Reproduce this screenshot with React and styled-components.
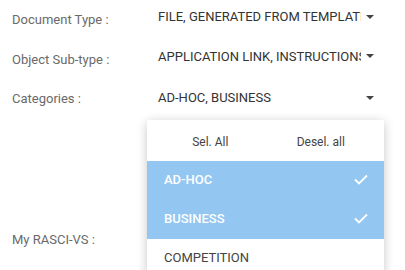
import React from "react";
import styled, { createGlobalStyle } from "styled-components";

const GlobalStyle = createGlobalStyle`
  body {
    margin: 0;
    background: #fff;
    font-family: Roboto, "Liberation Sans", sans-serif;
  }
`;

const fields = [
  { label: "Document Type :", value: "FILE, GENERATED FROM TEMPLATE", lift: 3 },
  { label: "Object Sub-type :", value: "APPLICATION LINK, INSTRUCTIONS", lift: 3 },
  { label: "Categories :", value: "AD-HOC, BUSINESS", lift: 1 },
];

const options = [
  { name: "AD-HOC", selected: true },
  { name: "BUSINESS", selected: true },
  { name: "COMPETITION", selected: false },
];

const App = () => {
  return (
    <Page>
      <GlobalStyle />
      <Form>
        {fields.map((f) => (
          <Row key={f.label}>
            <Label>{f.label}</Label>
            <Select $lift={f.lift}>
              <Value>{f.value}</Value>
              <Caret />
            </Select>
          </Row>
        ))}
        <Spacer />
        <Row>
          <Label>My RASCI-VS :</Label>
        </Row>
      </Form>

      <Menu>
        <MenuHeader>
          <HeaderButton>Sel. All</HeaderButton>
          <HeaderButton>Desel. all</HeaderButton>
        </MenuHeader>
        {options.map((o) => (
          <Option key={o.name} $selected={o.selected}>
            <span>{o.name}</span>
            {o.selected && (
              <svg width="14" height="11" viewBox="0 0 14 11">
                <path d="M1 5.5 L5 9.5 L13 1.5" fill="none" stroke="#fff" strokeWidth="1.8" />
              </svg>
            )}
          </Option>
        ))}
      </Menu>
    </Page>
  );
};

const Page = styled.div`
  position: relative;
  width: 405px;
  height: 270px;
  overflow: hidden;
`;

const Form = styled.div`
  display: flex;
  flex-direction: column;
  padding: 0 0 0 12px;
`;

const Row = styled.div`
  display: grid;
  grid-template-columns: 146px auto;
  justify-content: start;
  align-items: center;
  height: 39.5px;
`;

const Label = styled.div`
  font-size: 13px;
  color: #6a6a6a;
`;

const Select = styled.div`
  display: flex;
  align-items: center;
  gap: 5px;
  margin-top: -${(p) => p.$lift * 2}px;
`;

const Value = styled.div`
  width: 203px;
  overflow: hidden;
  white-space: nowrap;
  font-size: 13px;
  color: #333;
`;

const Caret = styled.span`
  width: 0;
  height: 0;
  border-left: 4px solid transparent;
  border-right: 4px solid transparent;
  border-top: 4px solid #444;
`;

const Spacer = styled.div`
  height: 101px;
`;

const Menu = styled.div`
  position: absolute;
  left: 147px;
  top: 120px;
  width: 237px;
  background: #fff;
  box-shadow: 0 2px 10px rgba(0, 0, 0, 0.22);
`;

const MenuHeader = styled.div`
  display: grid;
  grid-template-columns: 1fr 1fr;
  height: 41px;
  padding: 0 8px;
  align-items: center;
`;

const HeaderButton = styled.div`
  text-align: center;
  font-size: 12px;
  color: #444;
  padding-top: 3px;
`;

const Option = styled.div`
  box-sizing: border-box;
  display: flex;
  align-items: center;
  justify-content: space-between;
  height: 39px;
  padding: 0 16px 3px 17px;
  font-size: 13px;
  line-height: 1;
  background: ${(p) => (p.$selected ? "#93c6f1" : "#fff")};
  color: ${(p) => (p.$selected ? "#fff" : "#444")};
  font-weight: ${(p) => (p.$selected ? 500 : 400)};
`;

export default App;
